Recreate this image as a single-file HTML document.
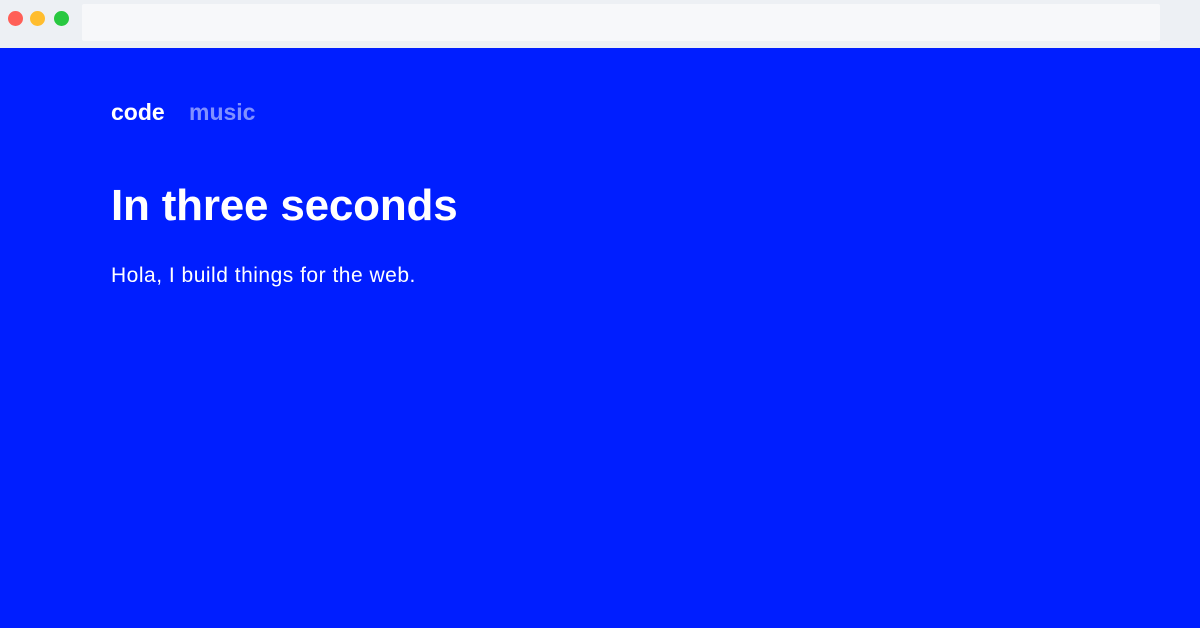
<!DOCTYPE html>
<html><head><style>
*{margin:0;padding:0;box-sizing:border-box}
body{width:1200px;height:628px;overflow:hidden;background:#001eff;font-family:"Liberation Sans",sans-serif;position:relative}
.bar{position:absolute;left:0;top:0;width:1200px;height:48px;background:#edf0f4}
.addr{position:absolute;left:82px;top:4px;width:1078px;height:37px;background:#f7f8fa;border-radius:2px}
.dot{position:absolute;top:11px;width:15px;height:15px;border-radius:50%}
.t{position:absolute;white-space:nowrap;color:#fff}
</style></head><body>
<div class="bar"><div class="addr"></div>
<div class="dot" style="left:8px;background:#ff5f57"></div>
<div class="dot" style="left:30px;background:#ffbd2e"></div>
<div class="dot" style="left:54px;background:#28c840"></div>
</div>
<div class="t" style="left:111px;top:98px;font-size:23px;font-weight:bold;line-height:28px">code</div>
<div class="t" style="left:189px;top:98px;font-size:23px;font-weight:bold;line-height:28px;color:#8090ff">music</div>
<div class="t" style="left:111px;top:180px;font-size:44px;font-weight:bold;line-height:52px;letter-spacing:-0.2px">In three seconds</div>
<div class="t" style="left:111px;top:263px;font-size:21px;line-height:26px;letter-spacing:0.5px">Hola, I build things for the web.</div>
</body></html>
